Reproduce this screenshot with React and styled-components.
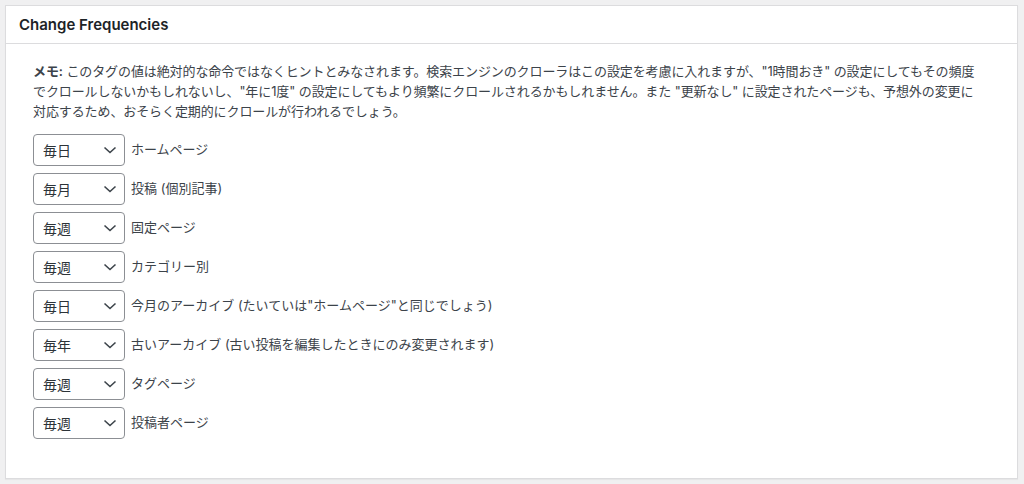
import React from "react";
import styled, { createGlobalStyle } from "styled-components";

const GlobalStyle = createGlobalStyle`
  * { box-sizing: border-box; }
  body {
    margin: 0;
    background: #f0f0f1;
    font-family: "Inter", "Noto Sans CJK JP", sans-serif;
    color: #3c434a;
  }
`;

const rows = [
  { value: "毎日", label: "ホームページ" },
  { value: "毎月", label: "投稿 (個別記事)" },
  { value: "毎週", label: "固定ページ" },
  { value: "毎週", label: "カテゴリー別" },
  { value: "毎日", label: "今月のアーカイブ (たいていは\"ホームページ\"と同じでしょう)" },
  { value: "毎年", label: "古いアーカイブ (古い投稿を編集したときにのみ変更されます)" },
  { value: "毎週", label: "タグページ" },
  { value: "毎週", label: "投稿者ページ" },
];

const options = ["常時", "毎時", "毎日", "毎週", "毎月", "毎年", "更新なし"];

const App = () => {
  return (
    <>
      <GlobalStyle />
      <Page>
        <Panel>
          <Header>
            <Title>Change Frequencies</Title>
          </Header>
          <Inside>
            <Note>
              <strong>メモ:</strong> このタグの値は絶対的な命令ではなくヒントとみなされます。検索エンジンのクローラはこの設定を考慮に入れますが、"1時間おき" の設定にしてもその頻度
              <br />
              でクロールしないかもしれないし、"年に1度" の設定にしてもより頻繁にクロールされるかもしれません。また "更新なし" に設定されたページも、予想外の変更に
              <br />
              対応するため、おそらく定期的にクロールが行われるでしょう。
            </Note>
            <List>
              {rows.map((row, i) => (
                <Row key={i}>
                  <SelectWrap>
                    <Select defaultValue={row.value}>
                      {options.map((o) => (
                        <option key={o} value={o}>{o}</option>
                      ))}
                    </Select>
                    <Chevron viewBox="0 0 16 16">
                      <polyline points="2.5,5.5 8,10.5 13.5,5.5" />
                    </Chevron>
                  </SelectWrap>
                  <Label>{row.label}</Label>
                </Row>
              ))}
            </List>
          </Inside>
        </Panel>
      </Page>
    </>
  );
};

const Page = styled.div`
  padding: 5px 6px 5px 5px;
`;

const Panel = styled.div`
  background: #fff;
  border: 1px solid #dcdcde;
  box-shadow: 0 1px 1px rgba(0, 0, 0, 0.04);
`;

const Header = styled.div`
  height: 38px;
  display: flex;
  align-items: center;
  padding: 0 13px;
  border-bottom: 1px solid #dcdcde;
`;

const Title = styled.h2`
  margin: 0;
  font-size: 15px;
  font-weight: 600;
  color: #1d2327;
`;

const Inside = styled.div`
  padding: 17px 10px 39px 27px;
`;

const Note = styled.p`
  margin: 0 0 13px;
  font-size: 13px;
  line-height: 20px;
  white-space: nowrap;
  letter-spacing: -0.1px;
  color: #3c434a;

  strong {
    font-weight: 600;
    color: #3c434a;
  }
`;

const List = styled.div`
  display: flex;
  flex-direction: column;
  gap: 7px;
`;

const Row = styled.div`
  display: flex;
  align-items: center;
  gap: 6px;
`;

const SelectWrap = styled.div`
  position: relative;
  width: 92px;
  height: 32px;
`;

const Select = styled.select`
  appearance: none;
  -webkit-appearance: none;
  width: 100%;
  height: 100%;
  margin: 0;
  padding: 0 24px 0 9px;
  border: 1px solid #8c8f94;
  border-radius: 4px;
  background: #fff;
  font-family: "Inter", "Noto Sans CJK JP", sans-serif;
  font-size: 14px;
  color: #2c3338;
  outline: none;
`;

const Chevron = styled.svg`
  position: absolute;
  right: 7px;
  top: 8px;
  width: 16px;
  height: 16px;
  fill: none;
  stroke: #3c434a;
  stroke-width: 1.6;
  pointer-events: none;
`;

const Label = styled.span`
  font-size: 13px;
  line-height: 20px;
  color: #3c434a;
  margin-top: -3px;
`;

export default App;
